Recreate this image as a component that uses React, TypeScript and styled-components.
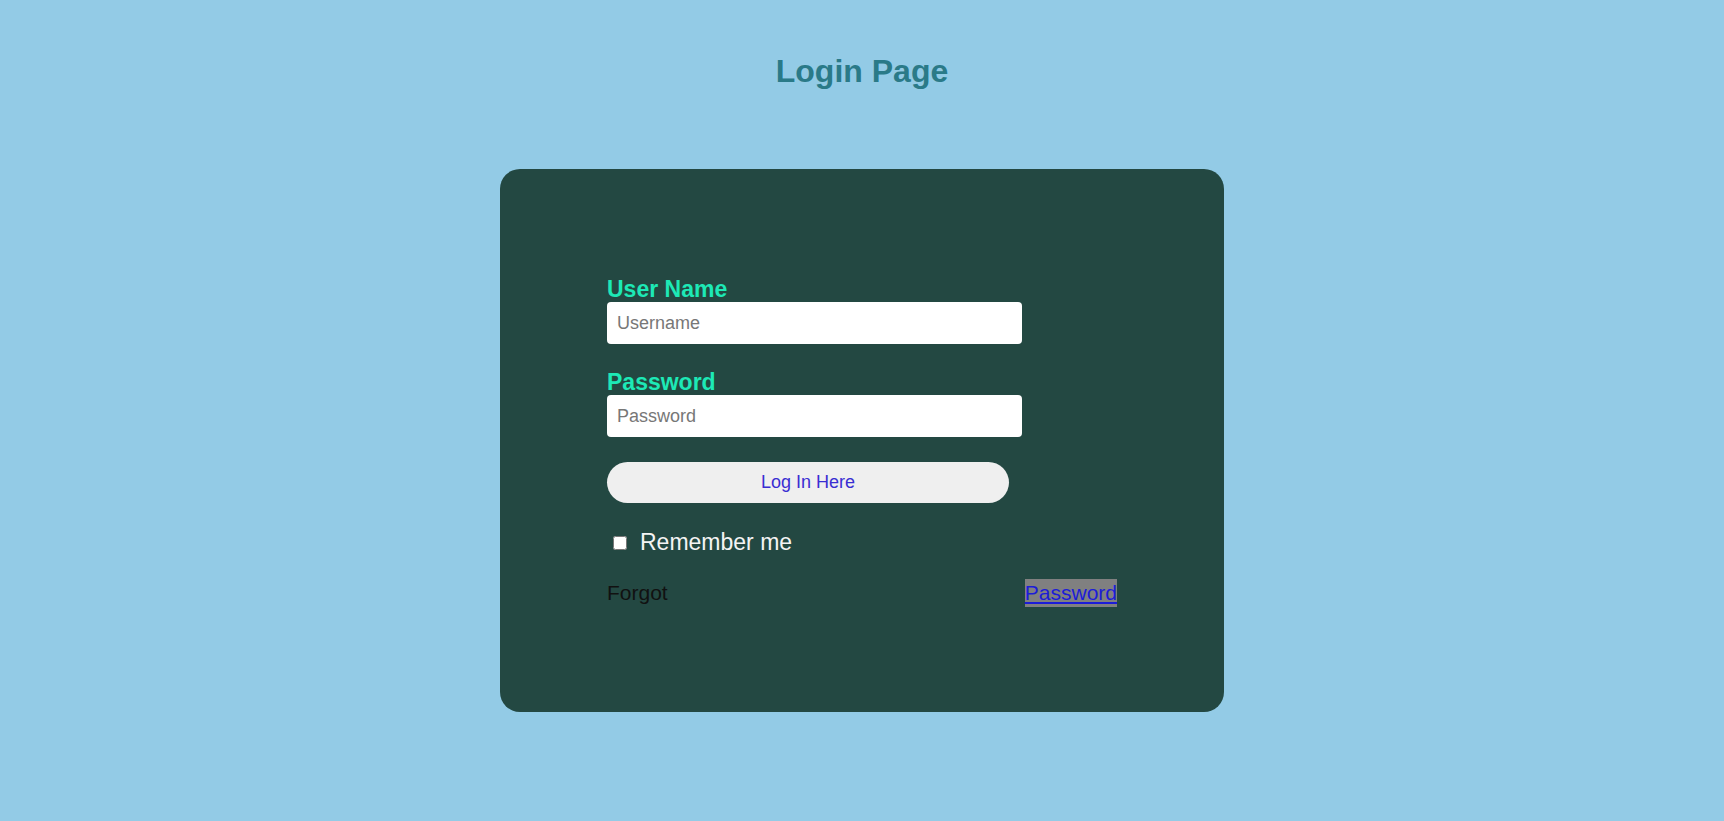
import React from 'react';
import styled, { createGlobalStyle } from 'styled-components';

const GlobalStyle = createGlobalStyle`
  body {
    margin: 0;
    background-color: #93cbe6;
    font-family: "Liberation Sans", Arial, sans-serif;
  }
`;

const Page = styled.div`
  display: flex;
  flex-direction: column;
  align-items: center;
  min-height: 100vh;
  padding-top: 53px;
  box-sizing: border-box;
`;

const Title = styled.h1`
  margin: 0 0 79px;
  font-size: 32px;
  line-height: 37px;
  font-weight: bold;
  color: #2a7a88;
`;

const Card = styled.div`
  width: 724px;
  height: 543px;
  box-sizing: border-box;
  padding: 108px 0 0 107px;
  background-color: #234842;
  border-radius: 20px;
`;

const Form = styled.form`
  display: flex;
  flex-direction: column;
  align-items: flex-start;
`;

const Label = styled.label`
  display: block;
  font-size: 23px;
  line-height: 25px;
  font-weight: bold;
  color: #1de9b6;
`;

const Input = styled.input`
  width: 415px;
  height: 42px;
  box-sizing: border-box;
  margin: 0 0 26px;
  padding: 0 10px;
  border: none;
  border-radius: 4px;
  background: #fff;
  font-family: inherit;
  font-size: 18px;
  color: #222;
  outline: none;

  &::placeholder {
    color: #777;
  }
`;

const Button = styled.button`
  width: 402px;
  height: 41px;
  margin-top: -1px;
  border: none;
  border-radius: 21px;
  background-color: #efefef;
  color: #3a2ed2;
  font-family: inherit;
  font-size: 18px;
  cursor: pointer;
`;

const Row = styled.div<{ $spread?: boolean; $gap?: number }>`
  display: flex;
  align-items: center;
  height: 25px;
  margin-top: ${(p) => p.$gap ?? 25}px;
  width: ${(p) => (p.$spread ? '510px' : 'auto')};
  justify-content: ${(p) => (p.$spread ? 'space-between' : 'flex-start')};
`;

const Check = styled.input`
  width: 14px;
  height: 14px;
  margin: 0 13px 0 6px;
`;

const CheckText = styled.span`
  font-size: 23px;
  color: #f4f4f4;
`;

const Plain = styled.span`
  font-size: 21px;
  color: #111;
`;

const ForgotLink = styled.a`
  font-size: 21px;
  color: #1c1cd8;
  background-color: #808080;
  padding: 2px 0;
  text-decoration: underline;
`;

export default function App() {
  return (
    <>
      <GlobalStyle />
      <Page>
        <Title>Login Page</Title>
        <Card>
          <Form onSubmit={(e) => e.preventDefault()}>
            <Label htmlFor="user">User Name</Label>
            <Input id="user" type="text" placeholder="Username" />
            <Label htmlFor="pass">Password</Label>
            <Input id="pass" type="password" placeholder="Password" />
            <Button type="submit">Log In Here</Button>
            <Row $gap={27}>
              <Check type="checkbox" id="remember" />
              <CheckText>Remember me</CheckText>
            </Row>
            <Row $spread>
              <Plain>Forgot</Plain>
              <ForgotLink href="#">Password</ForgotLink>
            </Row>
          </Form>
        </Card>
      </Page>
    </>
  );
}
